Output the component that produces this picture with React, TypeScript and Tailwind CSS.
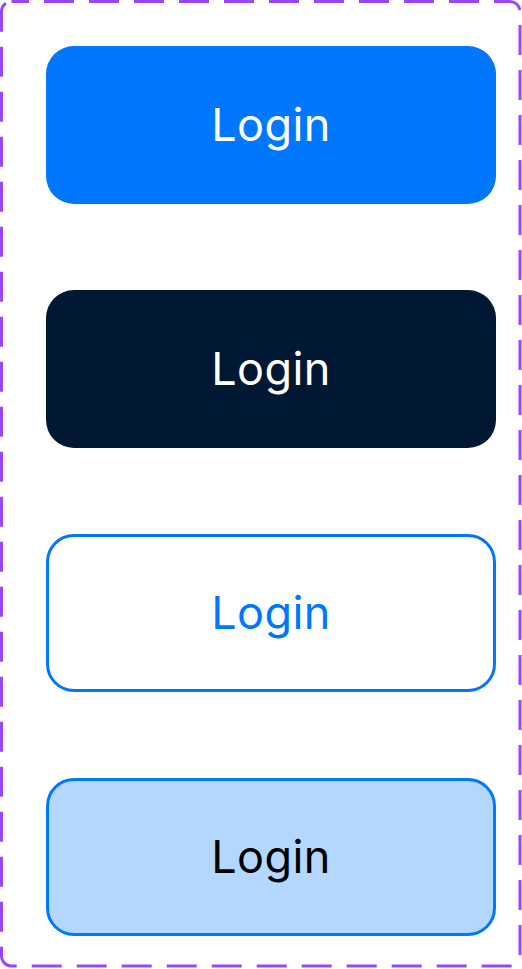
import React from 'react';

const variants = [
  { key: 'primary', className: 'bg-[#0077ff] text-white' },
  { key: 'dark', className: 'bg-[#001833] text-white' },
  { key: 'outline', className: 'bg-white text-[#0077ff] border-[3px] border-[#0077ff]' },
  { key: 'soft', className: 'bg-[#b3d7ff] text-black border-[3px] border-[#0077ff]' },
];

export default function App() {
  return (
    <div className="relative w-[522px] h-[969px] bg-white font-['Inter',sans-serif]">
      <svg className="absolute inset-0 pointer-events-none" width="522" height="969">
        <rect
          x="1.5"
          y="1.5"
          width="518.5"
          height="964.5"
          rx="10"
          fill="none"
          stroke="#9747ff"
          strokeWidth="3"
          strokeDasharray="30 15"
          strokeDashoffset="12.5"
        />
      </svg>
      <div className="flex flex-col gap-[86px] pl-[46px] pt-[46px]">
        {variants.map((v) => (
          <button
            key={v.key}
            className={`w-[450px] h-[158px] rounded-[28px] flex items-center justify-center text-[45px] font-normal tracking-[0.4px] ${v.className}`}
          >
            Login
          </button>
        ))}
      </div>
    </div>
  );
}
